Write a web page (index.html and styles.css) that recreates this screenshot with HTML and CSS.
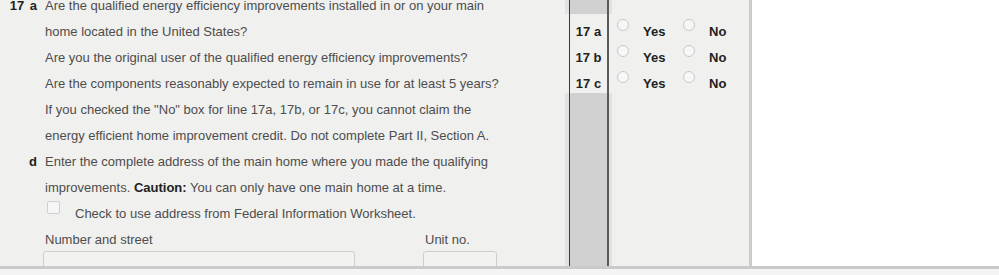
FILE: index.html
```html
<!DOCTYPE html>
<html lang="en">

<head>
    <meta charset="UTF-8">
    <title>Energy Efficient Home Improvement Credit</title>
    <link rel="stylesheet" href="styles.css">
</head>

<body>
    <div class="frame">
        <section class="panel">
            <div class="form">
                <div class="q">
                    <span class="num">17 a</span>
                    <p>Are the qualified energy efficiency improvements installed in or on your main home located in the United States?</p>
                </div>
                <div class="q">
                    <span class="num"></span>
                    <p>Are you the original user of the qualified energy efficiency improvements?</p>
                </div>
                <div class="q">
                    <span class="num"></span>
                    <p>Are the components reasonably expected to remain in use for at least 5 years?</p>
                </div>
                <div class="q">
                    <span class="num"></span>
                    <p>If you checked the "No" box for line 17a, 17b, or 17c, you cannot claim the energy efficient home improvement credit. Do not complete Part II, Section A.</p>
                </div>
                <div class="q">
                    <span class="num">d</span>
                    <p>Enter the complete address of the main home where you made the qualifying improvements. <b>Caution:</b> You can only have one main home at a time.</p>
                </div>
                <div class="q">
                    <span class="num"></span>
                    <label class="check"><span class="box"></span>Check to use address from Federal Information Worksheet.</label>
                </div>
                <div class="q">
                    <span class="num"></span>
                    <div class="fields">
                        <div class="field street">
                            <span>Number and street</span>
                            <div class="input"></div>
                        </div>
                        <div class="field unit">
                            <span>Unit no.</span>
                            <div class="input"></div>
                        </div>
                    </div>
                </div>
            </div>

            <div class="linecol">
                <div class="seg cap"><div class="rule"></div></div>
                <div class="seg labels">
                    <div class="rule">
                        <div>17 a</div>
                        <div>17 b</div>
                        <div>17 c</div>
                    </div>
                </div>
                <div class="seg cap rest"><div class="rule"></div></div>
            </div>

            <div class="answers">
                <div class="row">
                    <span class="opt"><span class="radio"></span>Yes</span>
                    <span class="opt"><span class="radio"></span>No</span>
                </div>
                <div class="row">
                    <span class="opt"><span class="radio"></span>Yes</span>
                    <span class="opt"><span class="radio"></span>No</span>
                </div>
                <div class="row">
                    <span class="opt"><span class="radio"></span>Yes</span>
                    <span class="opt"><span class="radio"></span>No</span>
                </div>
            </div>
        </section>
        <div class="blank"></div>
    </div>
</body>

</html>
```

FILE: styles.css
```css
* {
    font-family: "Liberation Sans", Arial, sans-serif;
    box-sizing: border-box;
}

body {
    margin: 0;
    background-color: #f4f4f4;
    font-size: 13px;
    color: #4d4d4d;
}

.frame {
    display: flex;
    height: 269px;
    border-bottom: 3px solid #cacaca;
    overflow: hidden;
}

.panel {
    display: flex;
    width: 752px;
    background-color: #f0f0ee;
    border-right: 3px solid #cbcbcb;
}

.blank {
    flex: 1;
    background-color: white;
}

/* venstre side med spørgsmål */
.form {
    width: 565px;
    margin-top: -7px;
}

.q {
    display: grid;
    grid-template-columns: 37px 468px;
    column-gap: 8px;
    line-height: 26px;
}

.q p {
    margin: 0;
}

.q b {
    color: #222;
}

.num {
    text-align: right;
    font-weight: bold;
    word-spacing: 2px;
    color: #222;
}

.check {
    display: flex;
    align-items: flex-start;
}

.box {
    width: 13px;
    height: 13px;
    margin: 0 15px 0 2px;
    border: 1px solid #cfcfcf;
    border-radius: 2px;
    background-color: #f6f6f6;
}

.fields {
    display: flex;
    margin-left: -2px;
}

.field span {
    display: block;
    line-height: 26px;
    padding-left: 2px;
}

.street {
    width: 380px;
}

.street .input {
    width: 312px;
}

.unit .input {
    width: 74px;
}

.input {
    height: 30px;
    margin-top: -2px;
    border: 1px solid #cdcdcd;
    border-radius: 3px;
    background-color: #f2f2f0;
}

/* linje-kolonnen */
.linecol {
    display: flex;
    flex-direction: column;
    width: 47px;
}

.seg {
    padding: 0 3px 0 4px;
}

.rule {
    height: 100%;
    border-left: 1px solid #3a3a3a;
    border-right: 2px solid #5a5a5a;
}

.cap {
    height: 14px;
    background-color: #e2e2e2;
}

.cap .rule {
    background-color: #d1d1d1;
}

.rest {
    flex: 1;
}

.labels {
    height: 79px;
}

.labels .rule {
    padding-top: 5px;
    text-align: center;
    line-height: 26px;
    font-weight: bold;
    color: #222;
}

/* ja / nej */
.answers {
    padding: 19px 0 0 5px;
}

.row {
    display: flex;
    height: 26px;
}

.opt {
    display: flex;
    align-items: flex-start;
    width: 66px;
    line-height: 26px;
    font-weight: bold;
    color: #222;
}

.radio {
    width: 12px;
    height: 12px;
    margin-right: 14px;
    border: 1px solid #c8c8c8;
    border-radius: 50%;
    background-color: #f7f7f7;
}
```
